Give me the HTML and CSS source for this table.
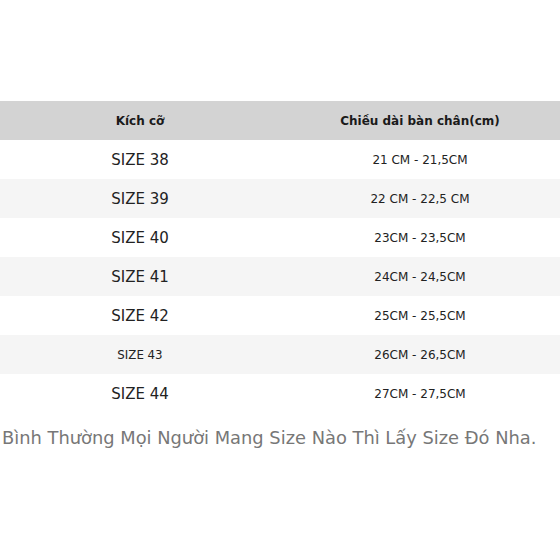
FILE: index.html
```html
<!DOCTYPE html>
<html lang="vi">
<head>
<meta charset="utf-8">
<link rel="stylesheet" href="styles.css">
</head>
<body>
<div class="page">
  <table class="size-table">
    <thead>
      <tr><th>Kích cỡ</th><th>Chiều dài bàn chân(cm)</th></tr>
    </thead>
    <tbody>
      <tr><td class="size">SIZE 38</td><td class="len">21 CM - 21,5CM</td></tr>
      <tr><td class="size">SIZE 39</td><td class="len">22 CM - 22,5 CM</td></tr>
      <tr><td class="size">SIZE 40</td><td class="len">23CM - 23,5CM</td></tr>
      <tr><td class="size">SIZE 41</td><td class="len">24CM - 24,5CM</td></tr>
      <tr><td class="size">SIZE 42</td><td class="len">25CM - 25,5CM</td></tr>
      <tr><td class="size small">SIZE 43</td><td class="len">26CM - 26,5CM</td></tr>
      <tr><td class="size">SIZE 44</td><td class="len">27CM - 27,5CM</td></tr>
    </tbody>
  </table>
  <p class="note">Bình Thường Mọi Người Mang Size Nào Thì Lấy Size Đó Nha.</p>
</div>
</body>
</html>
```
FILE: styles.css
```css
html, body {
  margin: 0;
  padding: 0;
  background: #fff;
}
body {
  font-family: "DejaVu Sans", sans-serif;
  color: #222;
}
.page {
  padding-top: 101px;
}
.size-table {
  width: 100%;
  border-collapse: collapse;
  table-layout: fixed;
}
.size-table th {
  background: #d3d3d3;
  height: 39px;
  padding: 0;
  font-size: 12px;
  font-weight: bold;
  color: #1a1a1a;
  text-align: center;
}
.size-table td {
  height: 39px;
  padding: 0;
  text-align: center;
}
.size-table tbody tr:nth-child(even) {
  background: #f5f5f5;
}
.size {
  font-size: 15px;
}
.size.small {
  font-size: 11.8px;
}
.len {
  font-size: 12px;
}
.note {
  margin: 14px 0 0;
  padding-left: 2px;
  font-size: 17.85px;
  color: #777;
  white-space: nowrap;
}
```
